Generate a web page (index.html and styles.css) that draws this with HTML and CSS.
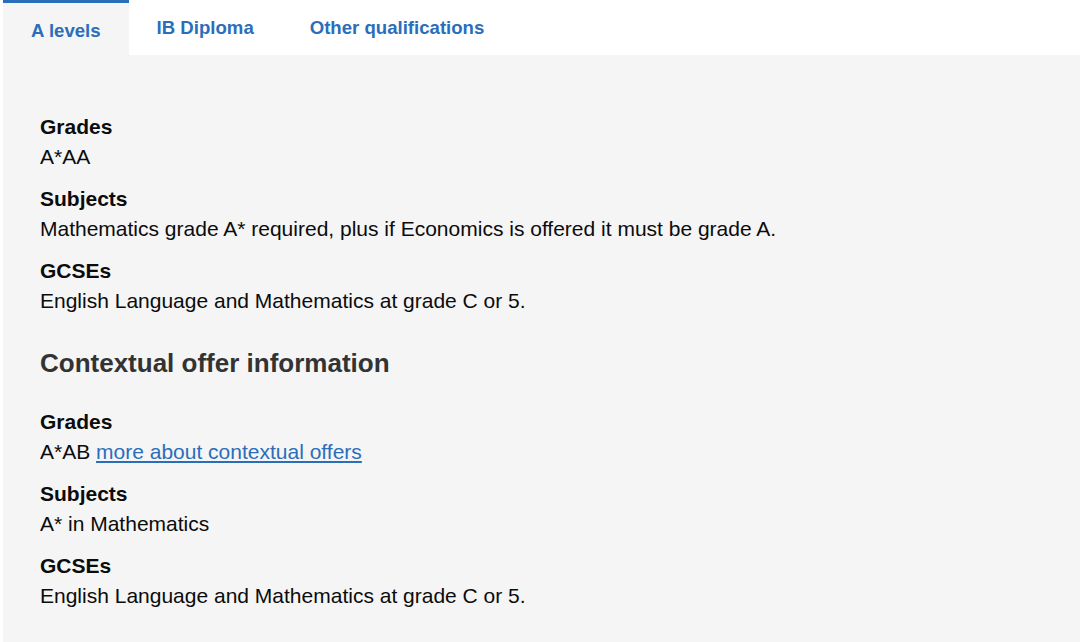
FILE: index.html
```html
<!DOCTYPE html>
<html lang="en">
<head>
    <meta charset="UTF-8">
    <title>Entry requirements</title>
    <link rel="stylesheet" href="styles.css">
</head>
<body>
    <div class="tabs">
        <ul class="tab-list">
            <li class="tab active"><a href="#">A levels</a></li>
            <li class="tab"><a href="#">IB Diploma</a></li>
            <li class="tab"><a href="#">Other qualifications</a></li>
        </ul>
        <div class="panel">
            <dl class="reqs">
                <dt>Grades</dt>
                <dd>A*AA</dd>
                <dt>Subjects</dt>
                <dd>Mathematics grade A* required, plus if Economics is offered it must be grade A.</dd>
                <dt>GCSEs</dt>
                <dd>English Language and Mathematics at grade C or 5.</dd>
            </dl>

            <h2>Contextual offer information</h2>

            <dl class="reqs">
                <dt>Grades</dt>
                <dd>A*AB <a href="#">more about contextual offers</a></dd>
                <dt>Subjects</dt>
                <dd>A* in Mathematics</dd>
                <dt>GCSEs</dt>
                <dd>English Language and Mathematics at grade C or 5.</dd>
            </dl>
        </div>
    </div>
</body>
</html>
```

FILE: styles.css
```css
body {
    margin: 0;
    font-family: "Liberation Sans", Arial, sans-serif;
    color: #0b0c0c;
    background: #fff;
}

.tabs {
    padding: 0 0 2px 3px;
}

.tab-list {
    display: flex;
    list-style: none;
    margin: 0;
    padding: 0;
}

.tab a {
    display: block;
    padding: 17px 28px 0;
    height: 38px;
    font-size: 18.6px;
    font-weight: bold;
    color: #2a6ebb;
    text-decoration: none;
}

.tab.active a {
    background: #f5f5f5;
    border-top: 3px solid #2a6ebb;
    height: 35px;
}

.panel {
    background: #f5f5f5;
    padding: 57px 40px 29px 37px;
}

.reqs {
    margin: 0;
}

.reqs dt {
    font-size: 21px;
    font-weight: bold;
    line-height: 30px;
}

.reqs dd {
    margin: 0 0 12px;
    font-size: 21px;
    line-height: 30px;
}

.panel h2 {
    margin: 30px 0 27px;
    font-size: 26px;
    line-height: 34px;
    color: #333;
}

.panel a {
    color: #2a6ebb;
}
```
